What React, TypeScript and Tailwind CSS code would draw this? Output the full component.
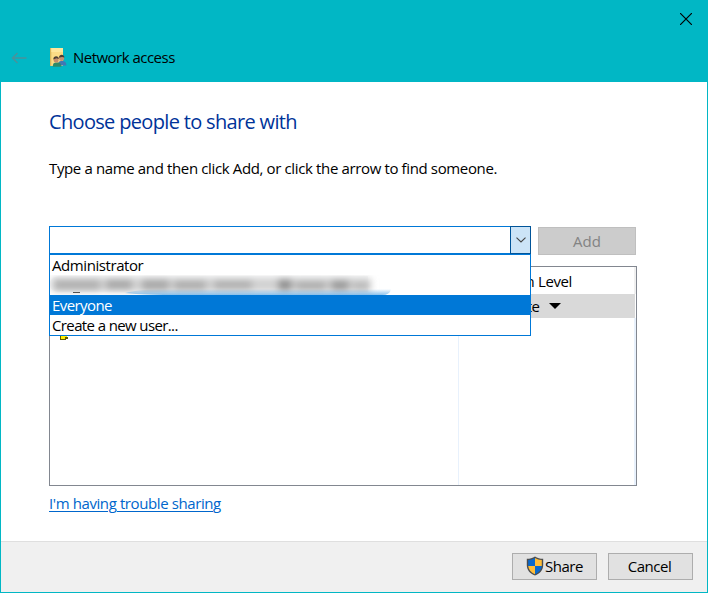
import type { ReactNode } from 'react';

function BackArrow() {
  return (
    <svg className="h-3 w-4" viewBox="0 0 16 12" fill="none" stroke="#4a929a" strokeWidth="1.5">
      <path d="M1.5 6H15.5M6.5 1L1.5 6L6.5 11" />
    </svg>
  );
}

function FolderUsers() {
  return (
    <svg className="h-5 w-[18px]" viewBox="0 0 18 20">
      <path d="M1 0H14V18H1Z" fill="#fbdc86" />
      <path d="M1 0H2.3V18H1Z" fill="#d8b75c" />
      <path d="M2.3 0H14V4H2.3Z" fill="#fee79c" />
      <path d="M9 17.5C9 14 10 13 12.8 13S17.4 14 17.4 17.5Z" fill="#3f78b5" />
      <circle cx="12.6" cy="10.4" r="2.5" fill="#c79070" />
      <path d="M9.9 9.8C9.9 5.9 15.4 5.9 15.4 9.6L13 8.9Z" fill="#4b3e35" />
      <path d="M3.8 18.8C3.8 15.5 4.8 14.6 7.8 14.6S12.4 15.5 12.4 18.8Z" fill="#2f8a68" />
      <circle cx="7.1" cy="12" r="2.5" fill="#c88d69" />
      <path d="M4.3 11.4C4.1 7.2 9.9 7.1 9.9 10.9L7.4 10.2Z" fill="#4b3e35" />
    </svg>
  );
}

function Shield() {
  return (
    <svg className="mb-px h-5 w-[18px] shrink-0" viewBox="0 0 18 20">
      <path d="M9 .5C6.6 2.2 4 2.8.8 2.8V9C.8 14 4 17.6 9 19.6C14 17.6 17.2 14 17.2 9V2.8C14 2.8 11.4 2.2 9 .5Z" fill="#4b4c4e" />
      <path d="M9 2C7 3.3 4.8 3.9 2.2 4V10H9Z" fill="#0968cb" />
      <path d="M9 2C11 3.3 13.2 3.9 15.8 4V10H9Z" fill="#ffbd37" />
      <path d="M2.2 10C2.5 13.7 4.8 16.4 9 18.2V10Z" fill="#ffbd37" />
      <path d="M15.8 10C15.5 13.7 13.2 16.4 9 18.2V10Z" fill="#0968cb" />
    </svg>
  );
}

function DialogButton({ children }: { children: ReactNode }) {
  return (
    <button className="flex h-[27px] w-[85px] items-center justify-center border border-[#adadad] bg-[#e1e1e1] pb-px text-[15px] tracking-[-0.45px]">
      {children}
    </button>
  );
}

function RedactedName() {
  return (
    <svg className="h-5 w-[342px]" viewBox="0 0 342 20">
      <defs>
        <filter id="smudge" x="-5%" y="-60%" width="110%" height="220%">
          <feGaussianBlur stdDeviation="3.5 3" />
        </filter>
        <linearGradient id="edge" x1="0" y1="0" x2="0" y2="1">
          <stop offset="0" stopColor="#0078d7" stopOpacity="0" />
          <stop offset="1" stopColor="#0078d7" stopOpacity=".45" />
        </linearGradient>
      </defs>
      <path d="M23 17.5H30" stroke="#222" />
      <path d="M0 7Q2 1 10 1H318V17H10Q0 17 0 10Z" fill="#f7f8f9" />
      <g filter="url(#smudge)">
        <path d="M2 3H321V16H2Z" fill="#d2d2d2" />
        <path d="M4 4H50V16H4Z" fill="#b4b4b4" />
        <path d="M56 4H82V15H56Z" fill="#acacac" />
        <path d="M92 4H119V16H92Z" fill="#acacac" />
        <path d="M124 5H156V16H124Z" fill="#b1b1b1" />
        <path d="M164 5H202V15H164Z" fill="#b3b3b3" />
        <path d="M228 4H242V16H228Z" fill="#949494" />
        <path d="M246 6H276V16H246Z" fill="#b0b0b0" />
        <path d="M281 5H299V16H281Z" fill="#9e9e9e" />
        <path d="M303 7H319V16H303Z" fill="#bbb" />
      </g>
      <path d="M75 18Q90 14 120 14H341Q340 20 332 20H130Q95 20 75 18Z" fill="url(#edge)" />
    </svg>
  );
}

export default function App() {
  return (
    <div className="flex h-[593px] w-[708px] flex-col bg-[#01b7c5] px-px pb-px font-['Open_Sans','Noto_Sans',sans-serif] text-[15px] leading-5 text-black">
      <header className="flex h-[82px] shrink-0 flex-col">
        <div className="flex h-[38px] items-center justify-end pr-[15px]">
          <svg className="h-3 w-3" viewBox="0 0 12 12" stroke="#000" strokeWidth="1.15">
            <path d="M0 0L12 12M12 0L0 12" />
          </svg>
        </div>
        <div className="flex h-10 items-center pl-[10px]">
          <BackArrow />
          <div className="ml-[22px]"><FolderUsers /></div>
          <span className="mb-[2px] ml-[6px] whitespace-nowrap text-[15px] tracking-[-0.52px]">Network access</span>
        </div>
      </header>
      <main className="flex min-h-0 flex-1 flex-col bg-white pl-12 pt-[26px]">
        <h1 className="h-7 whitespace-nowrap text-[20px] leading-7 tracking-[-0.67px] text-[#003399]">Choose people to share with</h1>
        <p className="mt-[22px] h-5 whitespace-nowrap tracking-[-0.365px]">Type a name and then click Add, or click the arrow to find someone.</p>
        <div className="mt-[48px] flex gap-[7px]">
          <div className="relative flex h-7 w-[482px] border border-[#0078d7] bg-white">
            <div className="flex-1" />
            <button className="-my-px -mr-px flex w-[21px] items-center justify-center border border-[#005499] bg-[#cce4f7]">
              <svg className="h-[6px] w-[10px]" viewBox="0 0 10 6" fill="none" stroke="#444" strokeWidth="1.1"><path d="M.5 .7L5 5L9.5 .7" /></svg>
            </button>
            <div className="absolute -left-px top-[27px] z-10 h-[82px] w-[482px] border border-[#0078d7] bg-white">
              <div className="h-5 whitespace-nowrap pl-[2px] tracking-[-0.42px]">Administrator</div>
              <div className="h-5"><RedactedName /></div>
              <div className="h-5 whitespace-nowrap bg-[#0078d7] pl-[2px] tracking-[-0.58px] text-white">Everyone</div>
              <div className="h-5 whitespace-nowrap pl-[2px] tracking-[-0.62px]">Create a new user...</div>
            </div>
          </div>
          <button className="mt-px h-7 w-[98px] border border-[#bfbfbf] bg-[#cccccc] text-[15px] text-[#838383]">Add</button>
        </div>
        <div className="mt-[11px] flex h-[220px] w-[588px] border border-[#828790]">
          <div className="w-[408px] border-t border-[#f0f0f0] pl-[9px] pt-[60px]">
            <svg className="h-[13px] w-[11px]" viewBox="0 0 11 13"><path d="M1 5H7V9H9V11H7V12H1Z" fill="#615d00" /><path d="M2 5H6V8H8V9H6V11H2Z" fill="#ffef00" /></svg>
          </div>
          <div className="flex-1 border-l border-[#e8f1fc]">
            <div className="flex h-[27px] items-center justify-end border-r-2 border-[#f0f0f0] pr-[62px] pt-px tracking-[-0.38px]"><span className="whitespace-nowrap">Permission Level</span></div>
            <div className="mr-px flex h-6 items-center bg-[#d9d9d9] pl-[9px]">
              <span className="w-[71px] whitespace-nowrap text-right tracking-[-0.7px]">Read/Write</span>
              <svg className="ml-[10px] h-[6px] w-3" viewBox="0 0 12 6"><path d="M0 0H12L6 6Z" /></svg>
            </div>
            <div className="h-[167px] border-r-2 border-[#e8f1fc]" />
          </div>
        </div>
        <a className="mt-[7px] h-5 self-start whitespace-nowrap text-[#0066cc] underline decoration-1 underline-offset-2 tracking-[-0.4px]">I'm having trouble sharing</a>
      </main>
      <footer className="flex h-[51px] shrink-0 justify-end gap-[11px] border-t border-[#dfdfdf] bg-[#f0f0f0] pr-[14px] pt-[11px]">
        <DialogButton><Shield /><span className="ml-px pb-px">Share</span></DialogButton>
        <DialogButton><span className="pb-px pr-[2px]">Cancel</span></DialogButton>
      </footer>
    </div>
  );
}
